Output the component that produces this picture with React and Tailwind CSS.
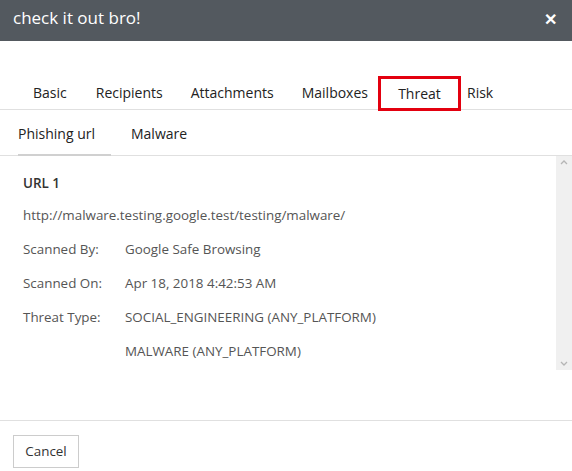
import React from "react";

export default function App() {
    const rows = [
        ["Scanned By:", "Google Safe Browsing"],
        ["Scanned On:", "Apr 18, 2018 4:42:53 AM"],
        ["Threat Type:", "SOCIAL_ENGINEERING (ANY_PLATFORM)"],
        ["", "MALWARE (ANY_PLATFORM)"],
    ];

    return (
        <div className="w-[572px] h-[471px] bg-white flex flex-col overflow-hidden font-['Open_Sans',sans-serif]">
            {/* header */}
            <div className="h-[41px] bg-[#53595f] flex items-center justify-between pl-[13px] pr-[15px] pb-[6px] shrink-0">
                <span className="text-white text-[17px]">check it out bro!</span>
                <span className="text-white text-[16px] font-bold leading-none mt-[2px]">✕</span>
            </div>

            {/* main tabs */}
            <div className="mt-[34px] h-[35px] border-b border-[#e0e0e0] flex items-center pl-[33px] text-[14px] text-[#222] shrink-0">
                <span className="mr-[29px]">Basic</span>
                <span className="mr-[28px]">Recipients</span>
                <span className="mr-[28px]">Attachments</span>
                <span className="mr-[10px]">Mailboxes</span>
                <span className="border-[3px] border-[#e3000f] h-[35px] w-[83px] flex items-center justify-center mt-[3px] mr-[6px]">Threat</span>
                <span>Risk</span>
            </div>

            {/* sub tabs */}
            <div className="h-[46px] border-b border-[#e0e0e0] flex items-end pl-[18px] text-[14px] text-[#222] shrink-0">
                <span className="pb-[10px] pr-[16px] border-b-2 border-[#d0d0d0] -mb-px">Phishing url</span>
                <span className="pb-[11px] ml-[20px]">Malware</span>
            </div>

            {/* content */}
            <div className="flex h-[214px] shrink-0">
                <div className="flex-1 pl-[23px] pt-[17px] text-[13.4px] text-[#555]">
                    <div className="font-semibold text-[#333] h-[32px]">URL 1</div>
                    <div className="h-[34px]">http://malware.testing.google.test/testing/malware/</div>
                    {rows.map(([label, value], i) => (
                        <div key={i} className="h-[34px] flex">
                            <span className="w-[102px]">{label}</span>
                            <span>{value}</span>
                        </div>
                    ))}
                </div>
                <div className="w-[16px] bg-[#f0f0f0] flex flex-col justify-between items-center py-[3px] text-[#b5b5b5]">
                    <svg width="8" height="6" viewBox="0 0 8 6"><path d="M1 5 L4 2 L7 5" fill="none" stroke="currentColor" strokeWidth="1.3" /></svg>
                    <svg width="8" height="6" viewBox="0 0 8 6"><path d="M1 1 L4 4 L7 1" fill="none" stroke="currentColor" strokeWidth="1.3" /></svg>
                </div>
            </div>

            {/* footer */}
            <div className="mt-[50px] border-t border-[#e0e0e0] pt-[14px] pl-[13px]">
                <button className="h-[33px] w-[66px] border border-[#ccc] text-[13.4px] text-[#333] bg-white">Cancel</button>
            </div>
        </div>
    );
}
